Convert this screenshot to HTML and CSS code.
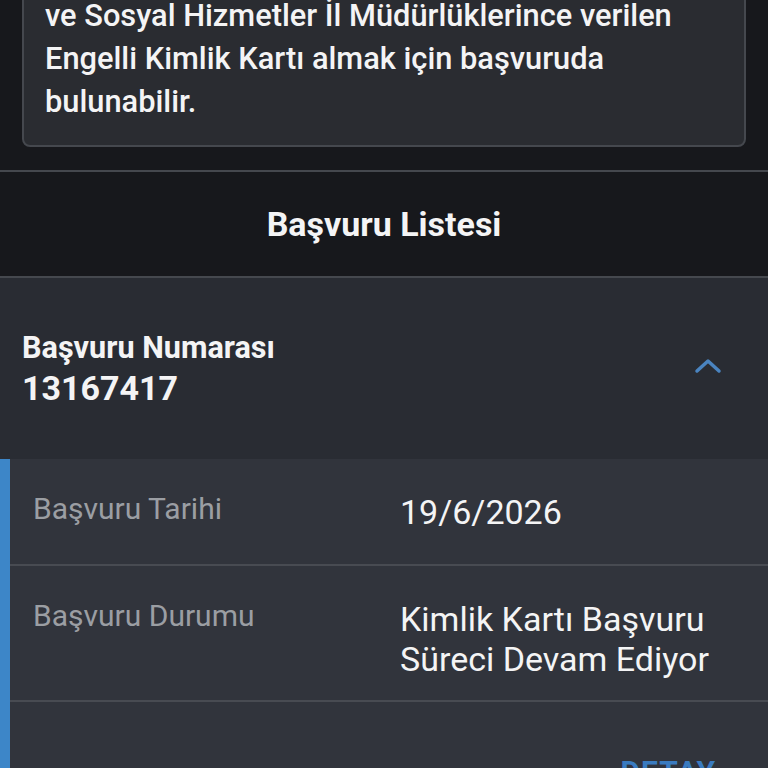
FILE: index.html
```html
<!DOCTYPE html>
<html lang="tr">
<head>
  <meta charset="UTF-8" />
  <meta name="viewport" content="width=device-width, initial-scale=1.0"/>
  <title>Başvuru Listesi</title>
  <link rel="stylesheet" href="styles.css">
</head>
<body>
  <div class="page">
    <div class="info-card">
      <p>ve Sosyal Hizmetler İl Müdürlüklerince verilen Engelli Kimlik Kartı almak için başvuruda bulunabilir.</p>
    </div>

    <h2 class="section-title">Başvuru Listesi</h2>

    <div class="application">
      <div class="app-head">
        <div>
          <div class="app-label">Başvuru Numarası</div>
          <div class="app-number">13167417</div>
        </div>
        <svg class="chevron" width="28" height="16" viewBox="0 0 28 16">
          <path d="M3 13 L14 3 L25 13" fill="none" stroke="#4a84c0" stroke-width="3.5" stroke-linecap="round" stroke-linejoin="round"/>
        </svg>
      </div>

      <div class="app-body">
        <div class="row">
          <div class="row-label">Başvuru Tarihi</div>
          <div class="row-value">19/6/2026</div>
        </div>
        <div class="row">
          <div class="row-label">Başvuru Durumu</div>
          <div class="row-value">Kimlik Kartı Başvuru Süreci Devam Ediyor</div>
        </div>
        <div class="actions">
          <button type="button">DETAY</button>
        </div>
      </div>
    </div>
  </div>
</body>
</html>
```

FILE: styles.css
```css
body {
  margin: 0;
  font-family: Roboto, 'Liberation Sans', sans-serif;
  background: #17181c;
  color: #f4f4f5;
  overflow: hidden;
}

.page {
  display: flex;
  flex-direction: column;
}

.info-card {
  margin: -28px 22px 0;
  background: #2a2c31;
  border: 2px solid #45484e;
  border-radius: 8px;
  padding: 20px 21px 22px;
}

.info-card p {
  margin: 0;
  font-size: 30.8px;
  font-weight: 500;
  line-height: 43px;
}

.section-title {
  margin: 23px 0 0;
  padding: 32px 0;
  border-top: 2px solid #45484e;
  border-bottom: 2px solid #45484e;
  text-align: center;
  font-size: 34px;
  font-weight: 700;
  line-height: 40px;
}

.app-head {
  background: #292c33;
  padding: 50px 46px 51px 22px;
  display: flex;
  align-items: center;
  justify-content: space-between;
}

.app-label {
  font-size: 30.6px;
  font-weight: 700;
  line-height: 40px;
}

.app-number {
  font-size: 34px;
  font-weight: 700;
  line-height: 40px;
}

.chevron {
  margin-top: -4px;
}

.app-body {
  background: #31343c;
  border-left: 10px solid #3d86c8;
}

.row {
  display: grid;
  grid-template-columns: 367px 1fr;
  min-height: 107px;
  box-sizing: border-box;
  padding: 30px 23px 21px;
  border-bottom: 2px solid #484b52;
}

.row-label {
  font-size: 30px;
  line-height: 40px;
  color: #9b9ea3;
}

.row-value {
  font-size: 34px;
  line-height: 40px;
  padding-top: 3px;
  color: #f4f4f5;
}

.actions {
  display: flex;
  justify-content: flex-end;
  padding: 52px 52px 30px;
}

.actions button {
  background: none;
  border: none;
  padding: 0;
  font-family: inherit;
  font-size: 30px;
  font-weight: 700;
  letter-spacing: 1px;
  color: #3a7bc0;
}
```
